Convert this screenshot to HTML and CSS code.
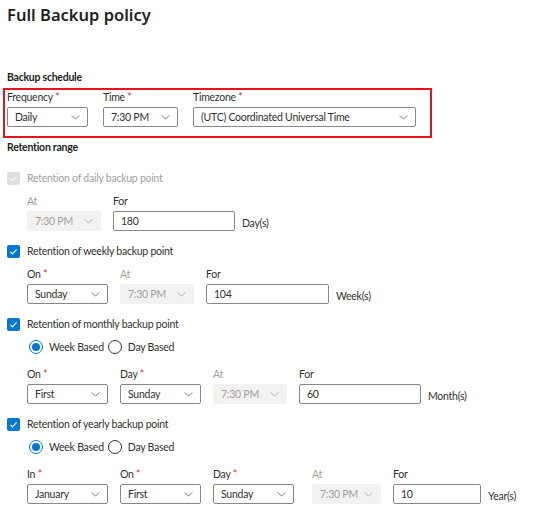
FILE: index.html
```html
<!DOCTYPE html>
<html lang="en">
<head>
<meta charset="utf-8">
<title>Full Backup policy</title>
<link rel="stylesheet" href="styles.css">
</head>
<body>
<div class="page">
  <h1 class="title">Full Backup policy</h1>

  <h2 class="section-title schedule-title">Backup schedule</h2>
  <div class="highlight">
    <div class="field w81">
      <div class="label">Frequency <span class="req">*</span></div>
      <div class="select"><span>Daily</span><svg class="chev" viewBox="0 0 10 6"><path d="M0.5 0.5 L5 5 L9.5 0.5"/></svg></div>
    </div>
    <div class="field w75">
      <div class="label">Time <span class="req">*</span></div>
      <div class="select"><span>7:30 PM</span><svg class="chev" viewBox="0 0 10 6"><path d="M0.5 0.5 L5 5 L9.5 0.5"/></svg></div>
    </div>
    <div class="field w223">
      <div class="label">Timezone <span class="req">*</span></div>
      <div class="select"><span>(UTC) Coordinated Universal Time</span><svg class="chev" viewBox="0 0 10 6"><path d="M0.5 0.5 L5 5 L9.5 0.5"/></svg></div>
    </div>
  </div>

  <h2 class="section-title retention-title">Retention range</h2>

  <div class="check-row disabled first-check">
    <span class="checkbox"><svg viewBox="0 0 12 12"><path d="M2.6 6.3 L4.9 8.6 L9.4 3.6"/></svg></span>
    <span>Retention of daily backup point</span>
  </div>
  <div class="fields-row">
    <div class="field w74">
      <div class="label dim">At</div>
      <div class="select disabled"><span>7:30 PM</span><svg class="chev" viewBox="0 0 10 6"><path d="M0.5 0.5 L5 5 L9.5 0.5"/></svg></div>
    </div>
    <div class="field w122">
      <div class="label">For</div>
      <div class="input">180</div>
    </div>
    <div class="unit">Day(s)</div>
  </div>

  <div class="check-row next-check">
    <span class="checkbox"><svg viewBox="0 0 12 12"><path d="M2.6 6.3 L4.9 8.6 L9.4 3.6"/></svg></span>
    <span>Retention of weekly backup point</span>
  </div>
  <div class="fields-row">
    <div class="field w81">
      <div class="label">On <span class="req">*</span></div>
      <div class="select"><span>Sunday</span><svg class="chev" viewBox="0 0 10 6"><path d="M0.5 0.5 L5 5 L9.5 0.5"/></svg></div>
    </div>
    <div class="field w74">
      <div class="label dim">At</div>
      <div class="select disabled"><span>7:30 PM</span><svg class="chev" viewBox="0 0 10 6"><path d="M0.5 0.5 L5 5 L9.5 0.5"/></svg></div>
    </div>
    <div class="field w123">
      <div class="label">For</div>
      <div class="input">104</div>
    </div>
    <div class="unit">Week(s)</div>
  </div>

  <div class="check-row next-check">
    <span class="checkbox"><svg viewBox="0 0 12 12"><path d="M2.6 6.3 L4.9 8.6 L9.4 3.6"/></svg></span>
    <span>Retention of monthly backup point</span>
  </div>
  <div class="radio-row">
    <span class="radio on"></span><span class="radio-label">Week Based</span>
    <span class="radio"></span><span class="radio-label">Day Based</span>
  </div>
  <div class="fields-row after-radio">
    <div class="field w81">
      <div class="label">On <span class="req">*</span></div>
      <div class="select"><span>First</span><svg class="chev" viewBox="0 0 10 6"><path d="M0.5 0.5 L5 5 L9.5 0.5"/></svg></div>
    </div>
    <div class="field w81">
      <div class="label">Day <span class="req">*</span></div>
      <div class="select"><span>Sunday</span><svg class="chev" viewBox="0 0 10 6"><path d="M0.5 0.5 L5 5 L9.5 0.5"/></svg></div>
    </div>
    <div class="field w74">
      <div class="label dim">At</div>
      <div class="select disabled"><span>7:30 PM</span><svg class="chev" viewBox="0 0 10 6"><path d="M0.5 0.5 L5 5 L9.5 0.5"/></svg></div>
    </div>
    <div class="field w122">
      <div class="label">For</div>
      <div class="input">60</div>
    </div>
    <div class="unit">Month(s)</div>
  </div>

  <div class="check-row next-check">
    <span class="checkbox"><svg viewBox="0 0 12 12"><path d="M2.6 6.3 L4.9 8.6 L9.4 3.6"/></svg></span>
    <span>Retention of yearly backup point</span>
  </div>
  <div class="radio-row">
    <span class="radio on"></span><span class="radio-label">Week Based</span>
    <span class="radio"></span><span class="radio-label">Day Based</span>
  </div>
  <div class="fields-row after-radio">
    <div class="field w81">
      <div class="label">In <span class="req">*</span></div>
      <div class="select"><span>January</span><svg class="chev" viewBox="0 0 10 6"><path d="M0.5 0.5 L5 5 L9.5 0.5"/></svg></div>
    </div>
    <div class="field w81">
      <div class="label">On <span class="req">*</span></div>
      <div class="select"><span>First</span><svg class="chev" viewBox="0 0 10 6"><path d="M0.5 0.5 L5 5 L9.5 0.5"/></svg></div>
    </div>
    <div class="field w81 gap-wide">
      <div class="label">Day <span class="req">*</span></div>
      <div class="select"><span>Sunday</span><svg class="chev" viewBox="0 0 10 6"><path d="M0.5 0.5 L5 5 L9.5 0.5"/></svg></div>
    </div>
    <div class="field w69">
      <div class="label dim">At</div>
      <div class="select disabled"><span>7:30 PM</span><svg class="chev" viewBox="0 0 10 6"><path d="M0.5 0.5 L5 5 L9.5 0.5"/></svg></div>
    </div>
    <div class="field w88">
      <div class="label">For</div>
      <div class="input">10</div>
    </div>
    <div class="unit">Year(s)</div>
  </div>
</div>
</body>
</html>
```

FILE: styles.css
```css
* { box-sizing: border-box; }

html, body {
  margin: 0;
  padding: 0;
  background: #ffffff;
}

body {
  font-family: Lato, "Noto Sans", sans-serif;
  font-size: 10.5px;
  letter-spacing: -0.25px;
  color: #323130;
}

.page {
  padding: 3px 0 0 7px;
  width: 545px;
}

.title {
  margin: 0;
  font-family: "Noto Sans", sans-serif;
  font-size: 16.5px;
  line-height: 24px;
  font-weight: 600;
  letter-spacing: 0;
  color: #201f1e;
}

.section-title {
  margin: 0;
  font-size: 10.5px;
  line-height: 14px;
  font-weight: 700;
  color: #201f1e;
}

.schedule-title {
  margin-top: 43px;
}

.highlight {
  margin: 4px 0 0 -4px;
  width: 429px;
  height: 50px;
  border: 2px solid #e3141b;
  padding: 0 0 0 2px;
  display: flex;
  gap: 15px;
}

.retention-title {
  margin-top: 2px;
}

.field {
  display: flex;
  flex-direction: column;
  flex: none;
}

.highlight .label {
  line-height: 14px;
  margin-bottom: 3px;
}

.label {
  line-height: 16px;
  margin-bottom: 2px;
  white-space: nowrap;
}

.label.dim { color: #a19f9d; }

.req { color: #d13438; }

.select, .input {
  height: 20px;
  border: 1px solid #8a8886;
  border-radius: 2px;
  display: flex;
  align-items: center;
  padding: 0 7px 0 7px;
  white-space: nowrap;
  background: #ffffff;
}

.select {
  justify-content: space-between;
}

.select.disabled {
  background: #f3f2f1;
  border-color: #f3f2f1;
  color: #a19f9d;
}

.chev {
  width: 9px;
  height: 5px;
  flex: none;
  fill: none;
  stroke: #605e5c;
  stroke-width: 1;
}

.select.disabled .chev { stroke: #a19f9d; }

.w69 { width: 69px; }
.w74 { width: 74px; }
.w75 { width: 75px; }
.w81 { width: 81px; }
.w88 { width: 88px; }
.w122 { width: 122px; }
.w123 { width: 123px; }
.w223 { width: 223px; }

.check-row {
  display: flex;
  align-items: center;
  height: 14px;
  gap: 7px;
}

.first-check { margin-top: 17px; }
.next-check { margin-top: 13px; }

.checkbox {
  width: 13px;
  height: 13px;
  border-radius: 2px;
  background: #0078d4;
  display: flex;
  align-items: center;
  justify-content: center;
  flex: none;
}

.checkbox svg {
  width: 11px;
  height: 11px;
  fill: none;
  stroke: #ffffff;
  stroke-width: 1.2;
}

.check-row.disabled { color: #a19f9d; }
.check-row.disabled .checkbox { background: #e1dfdd; }
.check-row.disabled .checkbox svg { stroke: #f8f8f8; }

.fields-row {
  display: flex;
  align-items: flex-end;
  gap: 12px;
  margin-top: 8px;
  padding-left: 20px;
}

.fields-row.after-radio { margin-top: 12px; }

.gap-wide { margin-right: 6px; }

.unit {
  margin-left: -5px;
  line-height: 16px;
  margin-bottom: 0;
  white-space: nowrap;
}

.radio-row {
  display: flex;
  align-items: center;
  height: 14px;
  margin-top: 9px;
  padding-left: 22px;
}

.radio {
  width: 14px;
  height: 14px;
  border-radius: 50%;
  border: 1px solid #323130;
  flex: none;
  position: relative;
}

.radio.on {
  border-color: #0078d4;
}

.radio.on::after {
  content: "";
  position: absolute;
  left: 2px;
  top: 2px;
  width: 8px;
  height: 8px;
  border-radius: 50%;
  background: #0078d4;
}

.radio-label {
  margin-left: 6px;
  margin-right: 4px;
}
```
